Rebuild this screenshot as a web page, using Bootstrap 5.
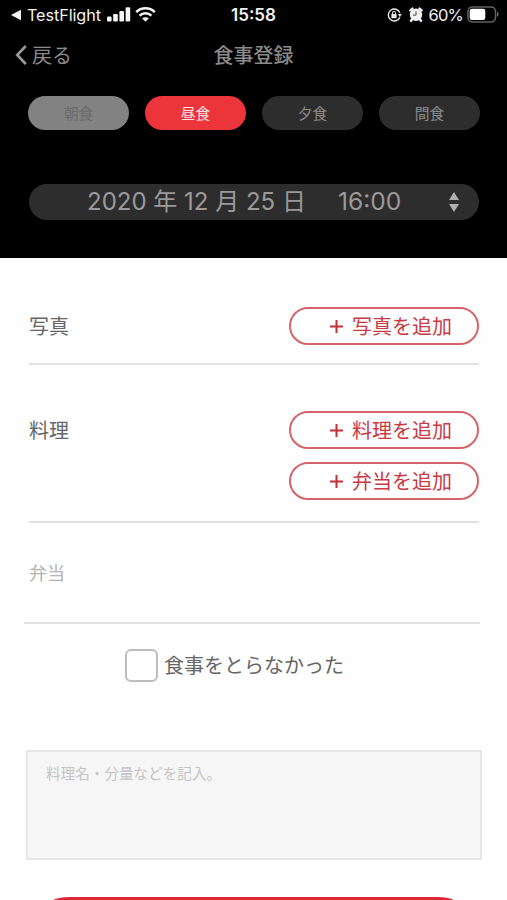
<!DOCTYPE html>
<html lang="ja">
<head>
<meta charset="utf-8">
<meta name="viewport" content="width=device-width, initial-scale=1">
<title>食事登録</title>
<link href="https://cdn.jsdelivr.net/npm/bootstrap@5.3.0/dist/css/bootstrap.min.css" rel="stylesheet">
<style>
  body { font-family: Inter, "Noto Sans CJK JP", sans-serif; color: #666; background: #fefefe; height: 900px; overflow: hidden; line-height: 1; }
  svg { display: block; flex: none; }
  .app-head { background: #000; height: 258px; }
  .status-row { height: 30px; padding: 0 8px 0 11px; color: #f2f2f2; font-size: 17px; }
  .status-row > div { flex: 1 1 0; }
  .status-app { font-size: 16.2px; letter-spacing: -.07px; margin: 0 6px 0 5px; }
  .status-time { margin-right: 3px; }
  .status-charge { font-size: 16.5px; letter-spacing: -.8px; }
  .title-row { height: 48px; padding: 3px 15px 0; color: #8a8a8a; font-size: 20px; }
  .title-row > * { flex: 1 1 0; }
  .page-title { font-size: 20px; font-weight: 500; }
  .meal-tabs { gap: 15.7px; padding: 18px 27px 0 28px; }
  .meal-tab { height: 34px; border-radius: 17px; border: 0; padding: 2px 0 0; background: #2d2d2d; color: #8c8c8c; font-size: 14.7px; line-height: 32px; }
  .meal-tab:disabled { background: #828282; color: #6b6b6b; opacity: 1; }
  .meal-tab.current { background: #ec343b; color: #ffe3e3; }
  .when-bar { margin: 54px 28px 0 29px; height: 36px; border-radius: 18px; background: #2d2d2d; color: #9a9a9a; font-size: 24px; padding: 0 19px 0 58px; }
  .when-date { width: 251px; }
  .when-time { font-size: 24.6px; margin-top: -2px; }
  .entry { margin: 0 28px 0 29px; border-bottom: 2px solid #e2e2e2; font-size: 20px; }
  .entry-photo { height: 107px; padding-top: 49px; }
  .entry-dish { height: 158px; padding-top: 46px; }
  .entry-bento { height: 101px; margin: 0 27px 0 24px; padding: 3px 0 0 5px; color: #b4b4b4; font-size: 18px; }
  .entry-name { height: 38px; line-height: 40px; }
  .add-btn { width: 190px; height: 38px; border: 2px solid #d4636b; border-radius: 19px; background: #fff; color: #c93a45; font-size: 20px; line-height: 1; padding: 1px 25px 0 38px; }
  .add-btn svg { margin-top: -1px; }
  .skip-row { height: 33px; margin-top: 25px; padding-left: 125px; gap: 6px; font-size: 20px; }
  .skip-row .form-check-input { width: 33px; height: 33px; margin: 0; border: 2px solid #bdbdbd; border-radius: 6px; background-color: #fff; }
  .memo { margin: 68px 25px 0 26px; height: 110px; border: 2px solid #e6e6e6; background: #f6f6f6; padding: 13px 18px; font-size: 14.6px; line-height: 18px; color: #c4c4c4; }
  .send-bar { height: 4px; margin: 37px 53px 0; border-radius: 18px 18px 0 0 / 4px 4px 0 0; background: #dc2833; }
</style>
<script src="https://cdn.jsdelivr.net/npm/bootstrap@5.3.0/dist/js/bootstrap.bundle.min.js"></script>
</head>
<body>
<header class="app-head">
  <div class="status-row d-flex align-items-center">
    <div class="d-flex align-items-center">
      <svg width="11" height="12" viewBox="0 0 11 12"><path d="M0 6 10 .8v10.4z" fill="#f5f5f5"/></svg>
      <span class="status-app">TestFlight</span>
      <svg width="24" height="15" viewBox="0 0 24 15" fill="#f5f5f5"><rect x="0" y="9.5" width="4.6" height="5" rx="1.2"/><rect x="6.2" y="7" width="4.6" height="7.5" rx="1.2"/><rect x="12.4" y="4" width="4.6" height="10.5" rx="1.2"/><rect x="18.6" y=".3" width="4.6" height="14.2" rx="1.2"/></svg>
      <svg class="ms-1" width="21" height="15" viewBox="0 0 21 15" fill="none" stroke="#f5f5f5" stroke-width="2.5"><path d="M1.2 5.2a13.2 13.2 0 0 1 18.6 0M4.6 8.7a8.4 8.4 0 0 1 11.8 0"/><path d="M10.5 14.8 7.2 11.5a4.7 4.7 0 0 1 6.6 0z" fill="#f5f5f5" stroke="none"/></svg>
    </div>
    <span class="status-time fw-semibold">15:58</span>
    <div class="d-flex align-items-center justify-content-end">
      <svg width="15" height="14" viewBox="0 0 15 14" fill="none" stroke="#e8e8e8" stroke-width="1.4"><path d="M12.9 9.2A6 6 0 1 1 12.9 4.8"/><path d="m10.8 6 3.9-.1-1.8 3z" fill="#e8e8e8" stroke="none"/><rect x="4.4" y="6" width="5.2" height="4.2" rx=".5" fill="#e8e8e8" stroke="none"/><path d="M5.5 6.5V5a1.5 1.5 0 0 1 3 0v1.5" stroke-width="1.1"/></svg>
      <svg style="margin:-2px 6px 0 7px" width="14" height="15" viewBox="0 0 14 15"><circle cx="7" cy="7.8" r="6.2" fill="#f2f2f2"/><path d="M1.4 3.4 3.4 1.6M12.6 3.4l-2-1.8M3 12.5l-1 1.3M11 12.5l1 1.3" stroke="#f2f2f2" stroke-width="2.4" stroke-linecap="round"/><path d="M7 4.3v3.8H4" stroke="#444" stroke-width="1" fill="none"/></svg>
      <span class="status-charge">60%</span>
      <svg style="margin:-2px 0 0 4px" width="32" height="17" viewBox="0 0 32 17"><rect x=".9" y=".9" width="27.6" height="15" rx="4.3" fill="none" stroke="#626262" stroke-width="1.5"/><rect x="2.7" y="2.8" width="15.6" height="11.2" rx="2.3" fill="#fff"/><path d="M30 5.8q3 2.6 0 5.2z" fill="#777"/></svg>
    </div>
  </div>
  <div class="title-row d-flex align-items-center">
    <a href="#" class="d-flex align-items-center text-reset text-decoration-none">
      <svg style="margin:-1px 4px 0 0" width="13" height="20" viewBox="0 0 13 20"><path d="M10.8 1 2.2 10l8.6 9" fill="none" stroke="#9a9a9a" stroke-width="2.6"/></svg>戻る
    </a>
    <h1 class="page-title m-0 text-center">食事登録</h1>
    <span></span>
  </div>
  <div class="meal-tabs d-flex">
    <button class="meal-tab flex-fill" disabled>朝食</button>
    <button class="meal-tab current flex-fill">昼食</button>
    <button class="meal-tab flex-fill">夕食</button>
    <button class="meal-tab flex-fill">間食</button>
  </div>
  <div class="when-bar d-flex align-items-center">
    <span class="when-date text-nowrap">2020 年 12 月 25 日</span>
    <span class="when-time">16:00</span>
    <svg class="ms-auto" width="12" height="20" viewBox="0 0 12 20" fill="#b0b0b0"><path d="M6 0l5 8H1zM6 20l5-8H1z"/></svg>
  </div>
</header>
<main>
  <section class="entry entry-photo d-flex justify-content-between">
    <span class="entry-name">写真</span>
    <button class="add-btn d-flex align-items-center justify-content-between"><svg width="15" height="15" viewBox="0 0 15 15"><path d="M7.5 1v13M1 7.5h13" stroke="#c92f3a" stroke-width="2"/></svg>写真を追加</button>
  </section>
  <section class="entry entry-dish d-flex justify-content-between">
    <span class="entry-name">料理</span>
    <div class="d-flex flex-column" style="gap:13px">
      <button class="add-btn d-flex align-items-center justify-content-between"><svg width="15" height="15" viewBox="0 0 15 15"><path d="M7.5 1v13M1 7.5h13" stroke="#c92f3a" stroke-width="2"/></svg>料理を追加</button>
      <button class="add-btn d-flex align-items-center justify-content-between"><svg width="15" height="15" viewBox="0 0 15 15"><path d="M7.5 1v13M1 7.5h13" stroke="#c92f3a" stroke-width="2"/></svg>弁当を追加</button>
    </div>
  </section>
  <section class="entry entry-bento d-flex align-items-center">弁当</section>
  <label class="skip-row d-flex align-items-center"><input type="checkbox" class="form-check-input">食事をとらなかった</label>
  <div class="memo">料理名・分量などを記入。</div>
  <div class="send-bar"></div>
</main>
</body>
</html>
